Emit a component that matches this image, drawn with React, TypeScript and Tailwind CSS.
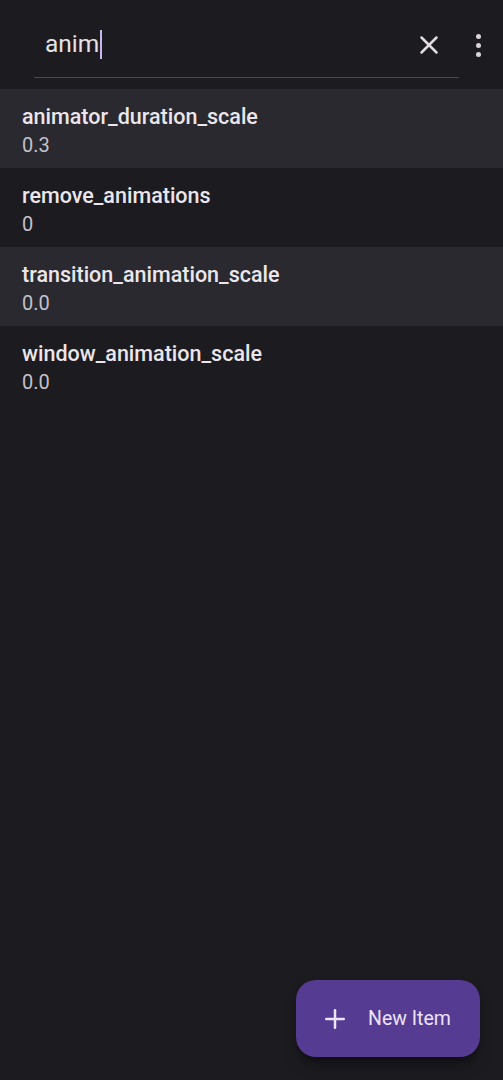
import { X, Plus } from "lucide-react"

const items = [
  { name: "animator_duration_scale", value: "0.3" },
  { name: "remove_animations", value: "0" },
  { name: "transition_animation_scale", value: "0.0" },
  { name: "window_animation_scale", value: "0.0" },
]

export default function App() {
  return (
    <div
      className="relative w-[503px] h-[1080px] bg-[#1c1b20] text-[#e6e1e6] overflow-hidden"
      style={{ fontFamily: "Roboto, 'Noto Sans', sans-serif" }}
    >
      {/* Search bar */}
      <header className="h-[89px] flex items-start">
        <div className="ml-[34px] w-[425px] h-[78px] pt-[12px] border-b border-[#4a4850] flex items-center">
          <span className="ml-[11px] text-[24.5px] leading-none text-[#e6e1e6]">anim</span>
          <span className="w-[2px] h-[29px] bg-[#c9b8f0] ml-[1px]" />
          <button className="ml-auto mr-[15px] text-[#e0dce2]">
            <X size={30} strokeWidth={2} />
          </button>
        </div>
        <div className="ml-[17px] mt-[34px] flex flex-col gap-[4px]">
          <span className="w-[5px] h-[5px] rounded-full bg-[#d8d4da]" />
          <span className="w-[5px] h-[5px] rounded-full bg-[#d8d4da]" />
          <span className="w-[5px] h-[5px] rounded-full bg-[#d8d4da]" />
        </div>
      </header>

      {/* List */}
      <ul>
        {items.map((it, i) => (
          <li
            key={it.name}
            className={`h-[79px] pl-[22px] pt-[14px] ${i % 2 === 0 ? "bg-[#2a292f]" : ""}`}
          >
            <div className="text-[21.5px] leading-[28px] font-medium text-[#ebe6ec]">{it.name}</div>
            <div className="text-[20px] leading-[28px] text-[#c5c0c8]">{it.value}</div>
          </li>
        ))}
      </ul>

      {/* FAB */}
      <button className="absolute left-[296px] top-[980px] w-[184px] h-[77px] rounded-[20px] bg-[#563b93] flex items-center pl-[24px] gap-[18px] shadow-lg shadow-black/40 text-[#ece4f7]">
        <Plus size={30} strokeWidth={2} />
        <span className="text-[19.5px]">New Item</span>
      </button>
    </div>
  )
}
